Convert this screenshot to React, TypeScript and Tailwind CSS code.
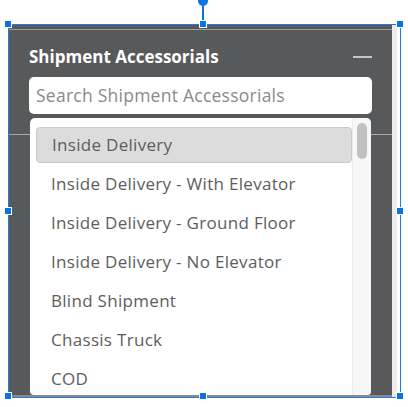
const items = [
  'Inside Delivery',
  'Inside Delivery - With Elevator',
  'Inside Delivery - Ground Floor',
  'Inside Delivery - No Elevator',
  'Blind Shipment',
  'Chassis Truck',
  'COD',
]

function Handle({ className }: { className: string }) {
  return <div className={`absolute w-[8px] h-[8px] bg-[#0b74e5] border border-white ${className}`} />
}

export default function App() {
  return (
    <div className="relative w-[408px] h-[407px] bg-white overflow-hidden" style={{ fontFamily: '"Open Sans", Lato, sans-serif' }}>
      {/* rotate handle */}
      <div className="absolute left-[198px] top-[-4px] w-[10px] h-[10px] rounded-full bg-[#0b74e5]" />
      <div className="absolute left-[202px] top-[4px] w-[2px] h-[18px] bg-[#0b74e5]" />

      <div className="absolute left-[8px] top-[24px] w-[393px] h-[374px] border border-[#1f7ae8]">
        <div className="flex h-full">
          <div className="relative w-[383px] h-full bg-[#58595b] border-b-2 border-[#8a8a8a]">
            <div className="mt-[4px] border-t border-[#9c9c9c] border-b border-b-[#a9a9a9] h-[106px] px-[20px]">
              <div className="flex items-center justify-between h-[47px] pt-[6px]">
                <span className="text-white font-bold text-[17px]">Shipment Accessorials</span>
                <div className="w-[19px] h-[2px] bg-[#c6c6c6]" />
              </div>
              <div className="h-[37px] bg-white rounded-[5px] flex items-center px-[7px] text-[17.5px] tracking-[0.25px] text-[#8a8a8a]">
                Search Shipment Accessorials
              </div>
            </div>

            {/* dropdown */}
            <div className="absolute left-[21px] top-[93px] w-[341px] bottom-0 bg-white rounded-[5px] rounded-b-[4px] overflow-hidden flex">
              <div className="flex-1 pt-[9px] pl-[6px]">
                {items.map((t, i) => (
                  <div
                    key={t}
                    className={`h-[36px] mb-[3px] flex items-center pl-[15px] text-[17px] tracking-[0.3px] text-[#5d5d5d] rounded-[4px] ${
                      i === 0 ? 'bg-[#dcdcdc] border border-[#c9c9c9] pl-[14px]' : ''
                    }`}
                  >
                    {t}
                  </div>
                ))}
              </div>
              <div className="w-[19px] bg-[#f7f7f7] border-l border-[#ececec] pt-[5px] flex justify-center">
                <div className="w-[10px] h-[36px] rounded-full bg-[#c1c1c1]" />
              </div>
            </div>
          </div>
          <div className="w-[5px] bg-[#ececec]" />
        </div>
      </div>

      <Handle className="left-[4px] top-[20px]" />
      <Handle className="left-[199px] top-[20px]" />
      <Handle className="left-[396px] top-[20px]" />
      <Handle className="left-[4px] top-[207px]" />
      <Handle className="left-[396px] top-[207px]" />
      <Handle className="left-[4px] top-[392px]" />
      <Handle className="left-[199px] top-[392px]" />
      <Handle className="left-[396px] top-[392px]" />
    </div>
  )
}
